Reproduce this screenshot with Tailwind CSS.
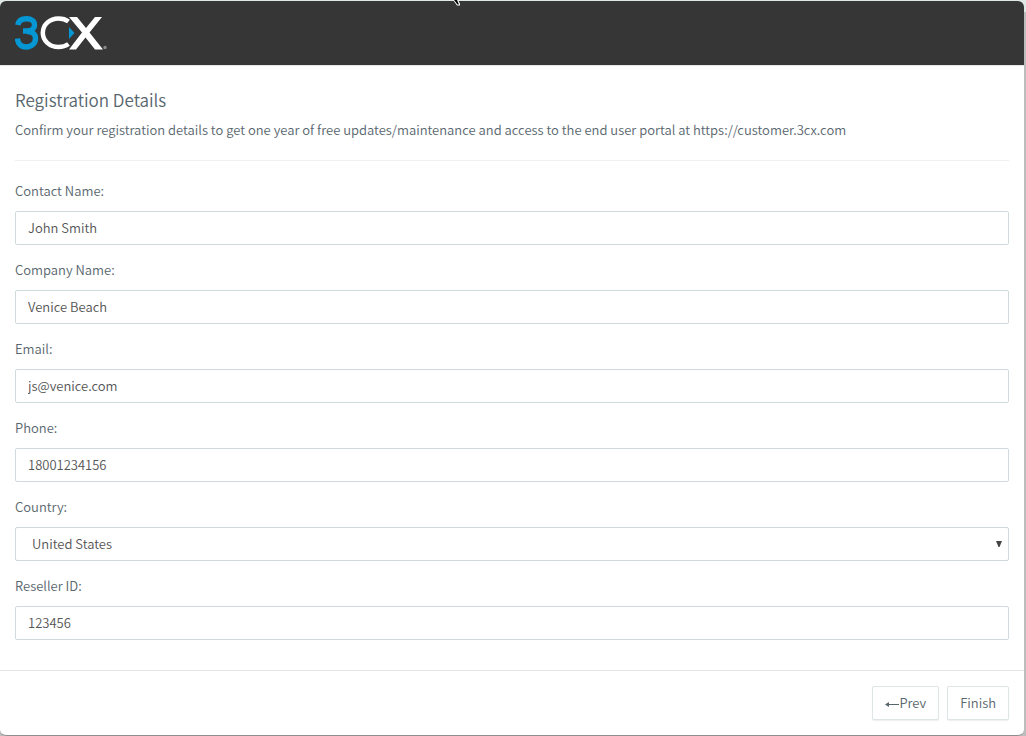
<!DOCTYPE html>
<html lang="en">
  <head>
    <meta charset="UTF-8" />
    <meta name="viewport" content="width=device-width, initial-scale=1.0" />
    <title>3CX - Registration Details</title>
    <script src="https://cdn.jsdelivr.net/npm/@tailwindcss/browser@4"></script>
  </head>
  <body
    class="min-h-screen flex flex-col bg-[#bdbdbd] pt-px pr-0.5 font-['Noto_Sans_CJK_SC',sans-serif] font-[350] text-[13px] leading-5 text-[#58666e]"
  >
    <!-- Page edge above the dialog -->
    <div class="absolute inset-x-0 top-0 h-3 bg-[#dfe8e5]"></div>

    <!-- Dialog -->
    <main
      class="relative flex-1 flex flex-col bg-white rounded-md overflow-hidden border-b border-[#8f8f8f]"
    >
      <!-- Header -->
      <header class="h-[65px] px-[15px] pt-3.5 bg-[#363636] border-b border-[#e5e5e5]">
        <svg class="w-[94px] h-9" viewBox="0 0 94 36" role="img" aria-label="3CX">
          <path
            d="M2.800 10C3.500 6 6.500 3.800 11.500 3.800C16.500 3.800 19.500 6 19.500 9.800C19.500 13.500 16.500 16 12 16H8M12 16.500C17.500 16.500 20.500 19 20.500 23.200C20.500 28 16.800 32 11.200 32C5.800 32 2.800 28.500 2.500 23.500"
            fill="none"
            stroke="#0596d4"
            stroke-width="5.400"
          />
          <path
            d="M53.500 6.500C50.500 4.200 47 3.500 43.500 3.500C34.500 3.500 27.800 9.800 27.800 17.800C27.800 25.800 34.500 32 43.500 32C47 32 50.500 31.200 53.500 29"
            fill="none"
            stroke="#fff"
            stroke-width="4.500"
          />
          <path d="M54 12L59.500 18L54 24Z" fill="#0596d4" />
          <path
            d="M54 2H62L71 13L80 2H87L74.500 17.500L88 34.500H80L70.500 22.500L61 34.500H54L67 17.500Z"
            fill="#fff"
          />
          <circle cx="90" cy="32.500" r="1.700" fill="#888" />
        </svg>
      </header>

      <!-- Registration form -->
      <form id="registration" class="px-[15px] pt-6 pb-[30px]">
        <h1 class="text-[17px] leading-5">Registration Details</h1>
        <p class="mt-2.5">
          Confirm your registration details to get one year of free updates/maintenance and access to the end user portal at https://customer.3cx.com
        </p>
        <hr class="my-5 border-[#edf1f2]" />

        <div class="flex flex-col gap-[15px]">
          <div class="flex flex-col gap-2.5">
            <label for="contact">Contact Name:</label>
            <input id="contact" type="text" value="John Smith" class="h-[34px] w-full px-3 pb-0.5 bg-white border border-[#cfdadd] rounded-xs text-[#555]" />
          </div>
          <div class="flex flex-col gap-2.5">
            <label for="company">Company Name:</label>
            <input id="company" type="text" value="Venice Beach" class="h-[34px] w-full px-3 pb-0.5 bg-white border border-[#cfdadd] rounded-xs text-[#555]" />
          </div>
          <div class="flex flex-col gap-2.5">
            <label for="email">Email:</label>
            <input id="email" type="email" value="js@venice.com" class="h-[34px] w-full px-3 pb-0.5 bg-white border border-[#cfdadd] rounded-xs text-[#555]" />
          </div>
          <div class="flex flex-col gap-2.5">
            <label for="phone">Phone:</label>
            <input id="phone" type="tel" value="18001234156" class="h-[34px] w-full px-3 pb-0.5 bg-white border border-[#cfdadd] rounded-xs text-[#555]" />
          </div>
          <div class="flex flex-col gap-2.5">
            <label for="country">Country:</label>
            <div class="relative">
              <select id="country" class="block appearance-none h-[34px] w-full px-4 bg-white border border-[#cfdadd] rounded-xs text-[#555]">
                <option>United States</option>
              </select>
              <svg class="absolute right-[7px] top-3.5 w-1.5 h-1.5 pointer-events-none" viewBox="0 0 6 6" aria-hidden="true">
                <path d="M0 0H6L3.500 6H2.500Z" fill="#444" />
              </svg>
            </div>
          </div>
          <div class="flex flex-col gap-2.5">
            <label for="reseller">Reseller ID:</label>
            <input id="reseller" type="text" value="123456" class="h-[34px] w-full px-3 pb-0.5 bg-white border border-[#cfdadd] rounded-xs text-[#555]" />
          </div>
        </div>
      </form>

      <!-- Footer -->
      <footer class="flex justify-end gap-2 p-[15px] border-t border-[#e5e5e5]">
        <button type="button" class="flex items-center h-[34px] px-3 bg-white border border-[#dee5e7] rounded-xs shadow-[0_1px_1px_rgba(90,90,90,0.1)]">
          <svg class="w-3.5 h-2" viewBox="0 0 14 8" aria-hidden="true">
            <path d="M1 5.500H14" fill="none" stroke="#58666e" />
            <path d="M0 5.500L4 3V8Z" fill="#58666e" />
          </svg>
          Prev
        </button>
        <button type="submit" form="registration" class="h-[34px] px-3 bg-white border border-[#dee5e7] rounded-xs shadow-[0_1px_1px_rgba(90,90,90,0.1)]">
          Finish
        </button>
      </footer>
    </main>

    <!-- Mouse pointer tip -->
    <svg class="absolute left-[453px] top-0 w-2 h-1.5" viewBox="0 0 8 6" aria-hidden="true">
      <path d="M0 0H5L7 3.500V5.500H4Z" fill="#fff" />
      <path d="M1 0H4L6 4.500H4.500Z" fill="#000" />
    </svg>
  </body>
</html>
